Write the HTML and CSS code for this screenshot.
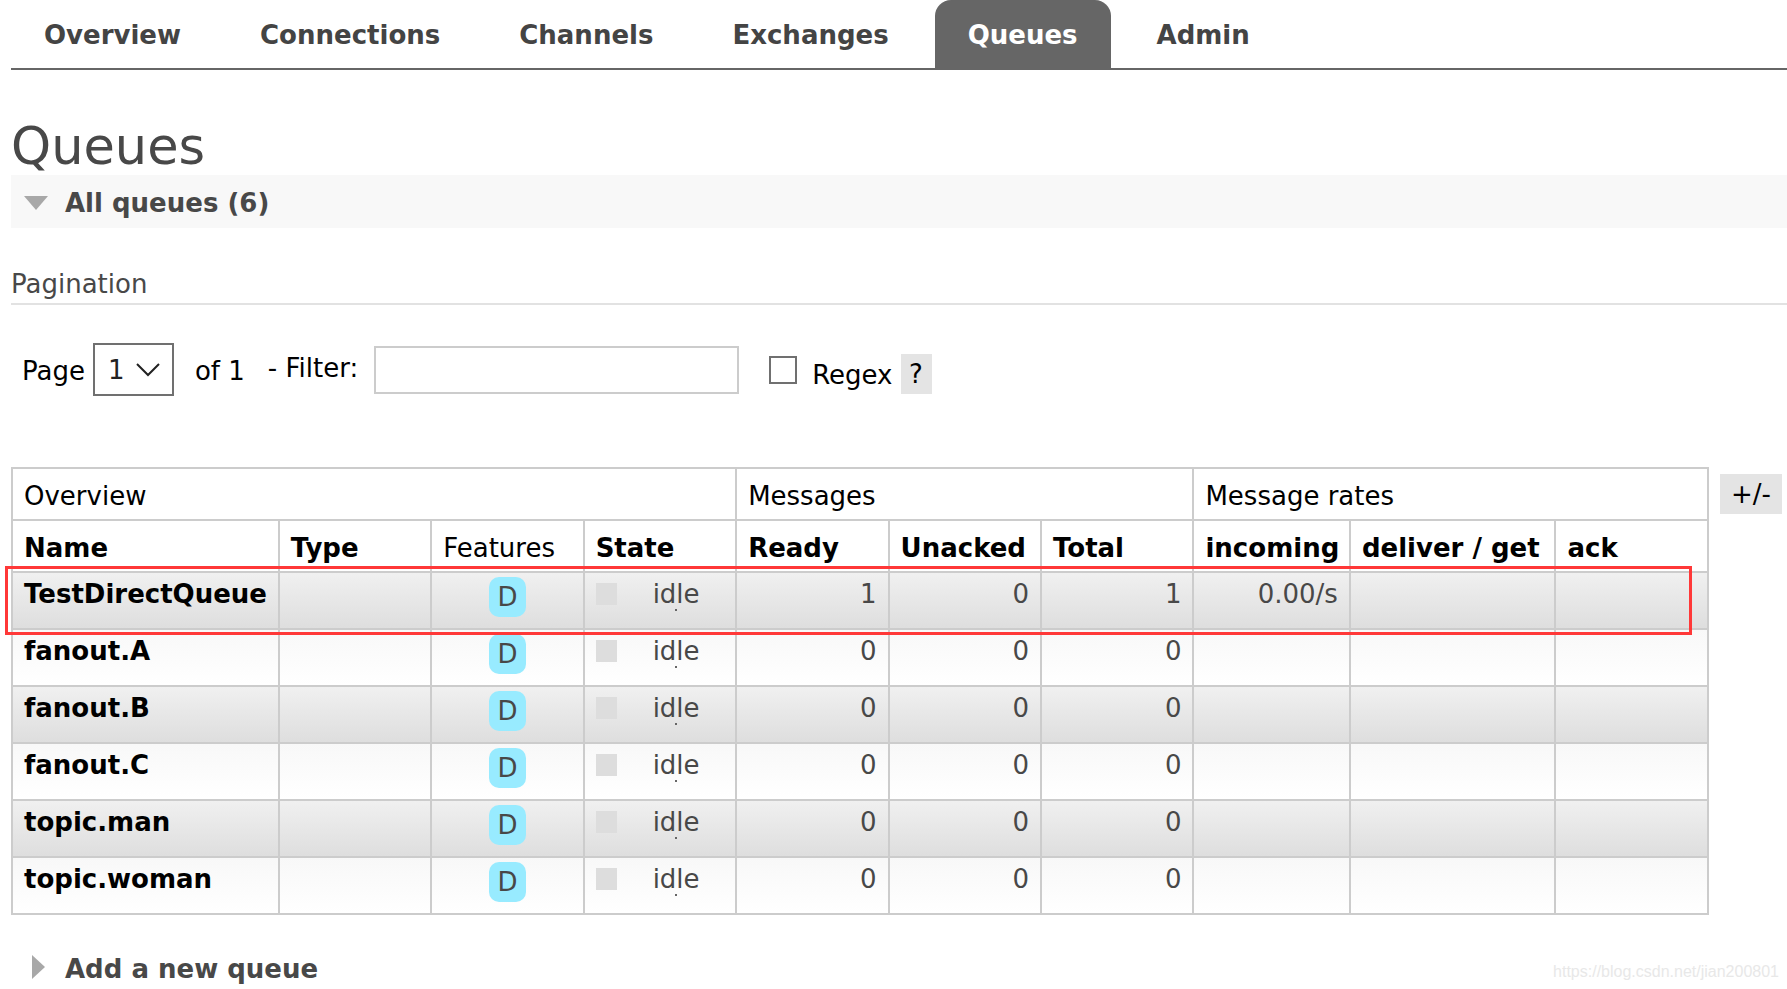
FILE: index.html
```html
<!DOCTYPE html>
<html lang="en">
<head>
<meta charset="utf-8">
<title>Queues</title>
<link rel="stylesheet" href="styles.css">
</head>
<body>
<nav class="tabs">
  <a class="tab" href="#overview">Overview</a>
  <a class="tab" href="#connections">Connections</a>
  <a class="tab" href="#channels">Channels</a>
  <a class="tab" href="#exchanges">Exchanges</a>
  <a class="tab tab-selected" href="#queues">Queues</a>
  <a class="tab" href="#admin">Admin</a>
</nav>
<main class="main">
  <h1 class="title">Queues</h1>
  <h2 class="section section-open">
    <svg class="arrow" viewBox="0 0 24 24" aria-hidden="true"><path d="M0 5h24L12 19z"/></svg>
    All queues (6)
  </h2>
  <h3 class="subtitle">Pagination</h3>
  <form class="filters">
    <label class="page-label" for="page">Page</label>
    <span class="select-box">
      <select class="page-select" id="page"><option>1</option></select>
      <svg class="chevron" viewBox="0 0 24 14" aria-hidden="true"><path d="M1 1l11 11L23 1"/></svg>
    </span>
    <span class="page-total">of 1</span>
    <label class="filter-label" for="filter">- Filter:</label>
    <input class="filter-input" id="filter" type="text">
    <input class="regex-box" id="regex" type="checkbox">
    <label class="regex-label" for="regex">Regex</label>
    <button class="chip help" type="button">?</button>
  </form>
  <div class="listing">
    <div class="table-wrap">
      <table class="queues">
        <colgroup>
          <col class="c-name"><col class="c-std"><col class="c-std"><col class="c-std"><col class="c-std"><col class="c-std"><col class="c-std"><col class="c-in"><col class="c-get"><col class="c-std">
        </colgroup>
        <thead>
          <tr><th class="plain" colspan="4">Overview</th><th class="plain" colspan="3">Messages</th><th class="plain" colspan="3">Message rates</th></tr>
          <tr><th>Name</th><th>Type</th><th class="plain">Features</th><th>State</th><th>Ready</th><th>Unacked</th><th>Total</th><th>incoming</th><th>deliver / get</th><th>ack</th></tr>
        </thead>
        <tbody>
          <tr><td><a class="queue" href="#q1">TestDirectQueue</a></td><td></td><td class="features"><span class="badge">D</span></td><td><div class="state"><span class="square"></span><span class="word">idle</span></div></td><td class="num">1</td><td class="num">0</td><td class="num">1</td><td class="num">0.00/s</td><td></td><td></td></tr>
          <tr><td><a class="queue" href="#q2">fanout.A</a></td><td></td><td class="features"><span class="badge">D</span></td><td><div class="state"><span class="square"></span><span class="word">idle</span></div></td><td class="num">0</td><td class="num">0</td><td class="num">0</td><td></td><td></td><td></td></tr>
          <tr><td><a class="queue" href="#q3">fanout.B</a></td><td></td><td class="features"><span class="badge">D</span></td><td><div class="state"><span class="square"></span><span class="word">idle</span></div></td><td class="num">0</td><td class="num">0</td><td class="num">0</td><td></td><td></td><td></td></tr>
          <tr><td><a class="queue" href="#q4">fanout.C</a></td><td></td><td class="features"><span class="badge">D</span></td><td><div class="state"><span class="square"></span><span class="word">idle</span></div></td><td class="num">0</td><td class="num">0</td><td class="num">0</td><td></td><td></td><td></td></tr>
          <tr><td><a class="queue" href="#q5">topic.man</a></td><td></td><td class="features"><span class="badge">D</span></td><td><div class="state"><span class="square"></span><span class="word">idle</span></div></td><td class="num">0</td><td class="num">0</td><td class="num">0</td><td></td><td></td><td></td></tr>
          <tr><td><a class="queue" href="#q6">topic.woman</a></td><td></td><td class="features"><span class="badge">D</span></td><td><div class="state"><span class="square"></span><span class="word">idle</span></div></td><td class="num">0</td><td class="num">0</td><td class="num">0</td><td></td><td></td><td></td></tr>
        </tbody>
      </table>
      <div class="highlight"></div>
    </div>
    <button class="chip columns" type="button">+/-</button>
  </div>
  <div class="footer">
    <h2 class="section">
      <svg class="arrow" viewBox="0 0 24 24" aria-hidden="true"><path d="M8 -2v24l13-12z"/></svg>
      Add a new queue
    </h2>
    <span class="watermark">https://blog.csdn.net/jian200801</span>
  </div>
</main>
</body>
</html>
```
FILE: styles.css
```css
* { box-sizing: border-box; }
body {
  margin: 0;
  background: #fff;
  color: #484848;
  font: 26px/30px "DejaVu Sans", Verdana, sans-serif;
  overflow: hidden;
}
h1, h2, h3 { margin: 0; }
a { text-decoration: none; }
input, select, button { font: inherit; margin: 0; border-radius: 0; }

.tabs {
  display: flex;
  gap: 13px;
  margin-left: 11px;
  border-bottom: 2px solid #666;
}
.tab {
  padding: 20px 33px 18px;
  border-radius: 16px 16px 0 0;
  color: #444;
  font-weight: bold;
}
.tab-selected { background: #666; color: #fff; }

.main { padding-left: 11px; }
.title {
  padding-top: 49px;
  font-size: 51px;
  line-height: 56px;
  font-weight: normal;
}
.section {
  display: flex;
  align-items: center;
  gap: 17px;
  padding: 13px 13px 10px;
  font-size: 26px;
  font-weight: bold;
}
.section-open { background: #f8f8f8; }
.arrow { width: 24px; height: 24px; fill: #a8a8a8; overflow: visible; }
.subtitle {
  margin-top: 41px;
  padding-bottom: 4px;
  border-bottom: 2px solid #e2e2e2;
  font-size: 26px;
  font-weight: normal;
}

.filters {
  display: flex;
  align-items: flex-start;
  margin-top: 38px;
  padding-left: 11px;
  color: #000;
}
.page-label { padding-top: 13px; }
.select-box { position: relative; margin-left: 8px; }
.page-select {
  display: block;
  width: 81px;
  height: 53px;
  padding: 0 13px;
  appearance: none;
  border: 2px solid #707070;
  background: #fff;
  color: #222;
}
.chevron {
  position: absolute;
  right: 14px;
  top: 20px;
  width: 24px;
  height: 14px;
  fill: none;
  stroke: #222;
  stroke-width: 2;
  pointer-events: none;
}
.page-total { margin-left: 21px; padding-top: 13px; }
.filter-label { margin-left: 23px; padding-top: 10px; }
.filter-input {
  width: 365px;
  height: 48px;
  margin: 3px 0 0 16px;
  padding: 0 8px;
  border: 2px solid #ccc;
}
.regex-box {
  width: 28px;
  height: 28px;
  margin: 13px 0 0 30px;
  appearance: none;
  border: 2px solid #707070;
  background: #fff;
}
.regex-label { margin-left: 15px; padding-top: 17px; }
.chip {
  flex: none;
  height: 40px;
  padding: 0;
  border: 0;
  background: #e4e4e4;
  color: #000;
  text-align: center;
  white-space: nowrap;
}
.help { width: 31px; margin: 11px 0 0 8px; }

.listing {
  display: flex;
  align-items: flex-start;
  gap: 11px;
  margin-top: 71px;
  padding-right: 5px;
}
.columns { width: 62px; margin-top: 7px; }
.table-wrap { position: relative; flex: 1; min-width: 0; }
.queues {
  width: 100%;
  table-layout: fixed;
  border-collapse: collapse;
}
.c-name { width: 266px; }
.c-std { width: 152px; }
.c-in { width: 156px; }
.c-get { width: 205px; }
th, td {
  border: 2px solid #ccc;
  text-align: left;
  vertical-align: top;
  white-space: nowrap;
}
th { padding: 12px 11px 8px; color: #000; }
.plain { font-weight: normal; }
td { height: 57px; padding: 6px 11px 0; }
tbody tr:nth-child(odd) td { background: linear-gradient(#f0f0f0, #dedede); }
tbody tr:nth-child(even) td { background: linear-gradient(#f8f8f8, #fff); }
.queue { color: #000; font-weight: bold; }
.num { text-align: right; }
.features { padding-top: 4px; text-align: center; }
.badge {
  display: inline-block;
  width: 37px;
  border-radius: 10px;
  background: #98ebff;
  line-height: 40px;
}
.state { display: flex; align-items: flex-start; }
.square {
  width: 21px;
  height: 22px;
  margin: 4px 36px 0 0;
  background: #ddd;
}
.word { display: grid; justify-items: center; }
.word::after {
  content: "";
  width: 2px;
  height: 2px;
  background: #666;
}
.highlight {
  position: absolute;
  top: 99px;
  left: -6px;
  right: 17px;
  height: 69px;
  border: 3px solid #ff3838;
  pointer-events: none;
}

.footer {
  display: flex;
  align-items: flex-end;
  justify-content: space-between;
  margin-top: 26px;
  padding-right: 8px;
}
.watermark {
  padding-bottom: 12px;
  color: #e8e8e8;
  font: 16px/20px "Liberation Sans", Arial, sans-serif;
}
```
